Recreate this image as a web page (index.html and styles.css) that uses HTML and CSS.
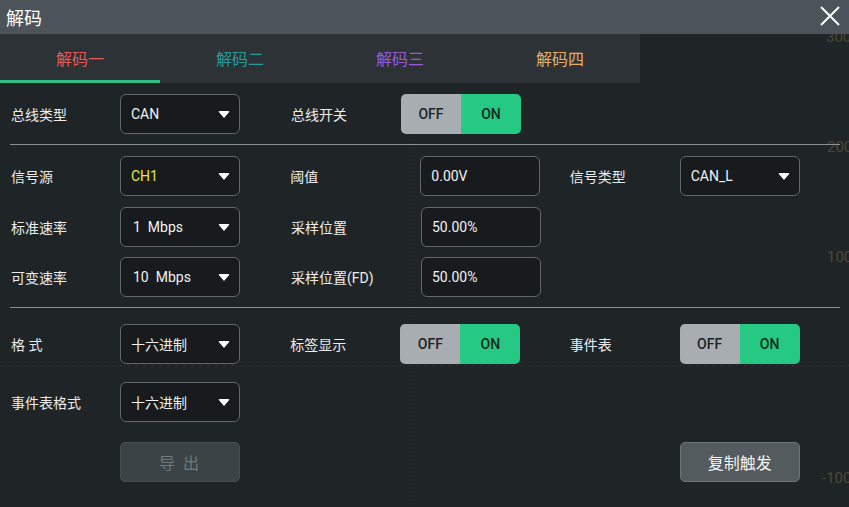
FILE: index.html
```html
<!DOCTYPE html>
<html lang="zh-CN">
<head>
<meta charset="utf-8">
<title>解码</title>
<link rel="stylesheet" href="styles.css">
</head>
<body>
<div class="scope">
  <div class="grid-h"></div>
  <div class="grid-v"></div>
  <span class="scale s300">300</span>
  <span class="scale s200">200</span>
  <span class="scale s100">100</span>
  <span class="scale sm100">-100</span>
</div>
<div class="dialog">
  <div class="titlebar">
    <span class="title">解码</span>
    <span class="close">
      <svg width="22" height="22" viewBox="0 0 22 22"><path d="M2 2 L20 20 M20 2 L2 20" stroke="#ffffff" stroke-width="2" fill="none"/></svg>
    </span>
  </div>
  <div class="tabs">
    <div class="tab active c1">解码一</div>
    <div class="tab c2">解码二</div>
    <div class="tab c3">解码三</div>
    <div class="tab c4">解码四</div>
  </div>
  <div class="content">
    <div class="row row1">
      <div class="cell"><span class="label">总线类型</span><div class="select"><span>CAN</span><i class="arrow"></i></div></div>
      <div class="cell"><span class="label">总线开关</span><div class="toggle"><span class="off">OFF</span><span class="on">ON</span></div></div>
    </div>
    <div class="divider d1"></div>
    <div class="row row2">
      <div class="cell"><span class="label">信号源</span><div class="select"><span class="yellow">CH1</span><i class="arrow"></i></div></div>
      <div class="cell"><span class="label">阈值</span><div class="input">0.00V</div></div>
      <div class="cell"><span class="label">信号类型</span><div class="select"><span>CAN_L</span><i class="arrow"></i></div></div>
    </div>
    <div class="row row3">
      <div class="cell"><span class="label">标准速率</span><div class="select"><span class="pad">1&nbsp; Mbps</span><i class="arrow"></i></div></div>
      <div class="cell"><span class="label">采样位置</span><div class="input">50.00%</div></div>
    </div>
    <div class="row row4">
      <div class="cell"><span class="label">可变速率</span><div class="select"><span class="pad">10&nbsp; Mbps</span><i class="arrow"></i></div></div>
      <div class="cell"><span class="label">采样位置(FD)</span><div class="input">50.00%</div></div>
    </div>
    <div class="divider d2"></div>
    <div class="row row5">
      <div class="cell"><span class="label">格&nbsp;式</span><div class="select"><span>十六进制</span><i class="arrow"></i></div></div>
      <div class="cell"><span class="label">标签显示</span><div class="toggle"><span class="off">OFF</span><span class="on">ON</span></div></div>
      <div class="cell"><span class="label">事件表</span><div class="toggle"><span class="off">OFF</span><span class="on">ON</span></div></div>
    </div>
    <div class="row row6">
      <div class="cell"><span class="label">事件表格式</span><div class="select"><span>十六进制</span><i class="arrow"></i></div></div>
    </div>
    <div class="row row7">
      <div class="cell"><span class="label"></span><div class="btn disabled">导 出</div></div>
      <div class="cell"></div>
      <div class="cell"><span class="label"></span><div class="btn">复制触发</div></div>
    </div>
  </div>
</div>
</body>
</html>
```
FILE: styles.css
```css
* { box-sizing: border-box; }
html, body {
  margin: 0;
  padding: 0;
}
body {
  width: 849px;
  height: 507px;
  overflow: hidden;
  background: #1f2427;
  font-family: Roboto, "Noto Sans CJK SC", sans-serif;
  color: #ececec;
  position: relative;
}
.scope {
  position: absolute;
  inset: 0;
  z-index: 0;
}
.grid-h {
  position: absolute;
  left: 0; right: 0; top: 365px; height: 1px;
  background: repeating-linear-gradient(90deg, #30363a 0 2px, transparent 2px 8px);
}
.grid-v {
  position: absolute;
  top: 83px; bottom: 0; left: 413px; width: 1px;
  background: repeating-linear-gradient(180deg, #2a3033 0 2px, transparent 2px 8px);
}
.scale {
  position: absolute;
  font-size: 15px;
  color: #4a4a34;
}
.s300 { left: 826px; top: 28px; }
.s200 { left: 827px; top: 138px; }
.s100 { left: 827px; top: 248px; }
.sm100 { left: 822px; top: 469px; }

.dialog {
  position: relative;
  z-index: 1;
  display: flex;
  flex-direction: column;
}
.titlebar {
  height: 34px;
  background: #4c5459;
  display: flex;
  align-items: center;
  justify-content: space-between;
  padding: 0 8px 0 6px;
}
.title {
  font-size: 18px;
  color: #ffffff;
}
.close {
  display: flex;
  width: 22px;
  height: 22px;
  margin-top: -2px;
}
.tabs {
  width: 640px;
  height: 49px;
  background: #2c3236;
  display: flex;
}
.tab {
  width: 160px;
  height: 49px;
  display: flex;
  align-items: center;
  justify-content: center;
  font-size: 16px;
  padding-top: 2px;
  border-bottom: 3px solid transparent;
}
.tab.active { border-bottom-color: #2dbf85; }
.c1 { color: #e35a57; }
.c2 { color: #239c9a; }
.c3 { color: #9a5ad6; }
.c4 { color: #e6ad6a; }

.content {
  display: flex;
  flex-direction: column;
  padding: 11px 0 0 11px;
}
.row {
  display: flex;
  height: 40px;
}
.row2 { margin-top: 11px; }
.row3 { margin-top: 11px; }
.row4 { margin-top: 10px; }
.row5 { margin-top: 16px; }
.row6 { margin-top: 18px; }
.row7 { margin-top: 20px; }
.divider {
  height: 1px;
  width: 830px;
  margin-left: -1px;
  background: #8d9193;
}
.d1 { margin-top: 10px; }
.d2 { margin-top: 10px; }
.cell {
  width: 280px;
  display: flex;
  align-items: center;
}
.label {
  width: 110px;
  font-size: 14px;
  color: #ececec;
}
.cell:first-child .label { width: 109px; }
.select, .input {
  width: 120px;
  height: 40px;
  border: 1px solid #62676a;
  border-radius: 6px;
  background: #171b1d;
  display: flex;
  align-items: center;
  font-size: 14px;
  color: #f2f2f2;
}
.select {
  justify-content: space-between;
  padding: 0 9px 0 10px;
}
.select .pad { padding-left: 2px; }
.input {
  margin-left: 20px;
  padding-left: 10px;
}
.yellow { color: #e9e83c; }
.arrow {
  width: 0;
  height: 0;
  border-left: 6px solid transparent;
  border-right: 6px solid transparent;
  border-top: 7px solid #ffffff;
  border-radius: 2px;
}
.toggle {
  width: 120px;
  height: 40px;
  display: flex;
  border-radius: 5px;
  overflow: hidden;
  font-size: 14px;
  font-weight: 500;
}
.toggle span {
  flex: 1;
  display: flex;
  align-items: center;
  justify-content: center;
}
.toggle .off { background: #a8adb1; color: #1d2326; }
.toggle .on { background: #26c983; color: #0f2a1d; }
.btn {
  width: 120px;
  height: 40px;
  border-radius: 5px;
  background: #535b5f;
  border: 1px solid #6d7579;
  display: flex;
  align-items: center;
  justify-content: center;
  font-size: 16px;
  color: #f4f4f4;
}
.btn.disabled {
  background: #3a4446;
  border-color: #465052;
  color: #6e797b;
  letter-spacing: 2px;
}
```
